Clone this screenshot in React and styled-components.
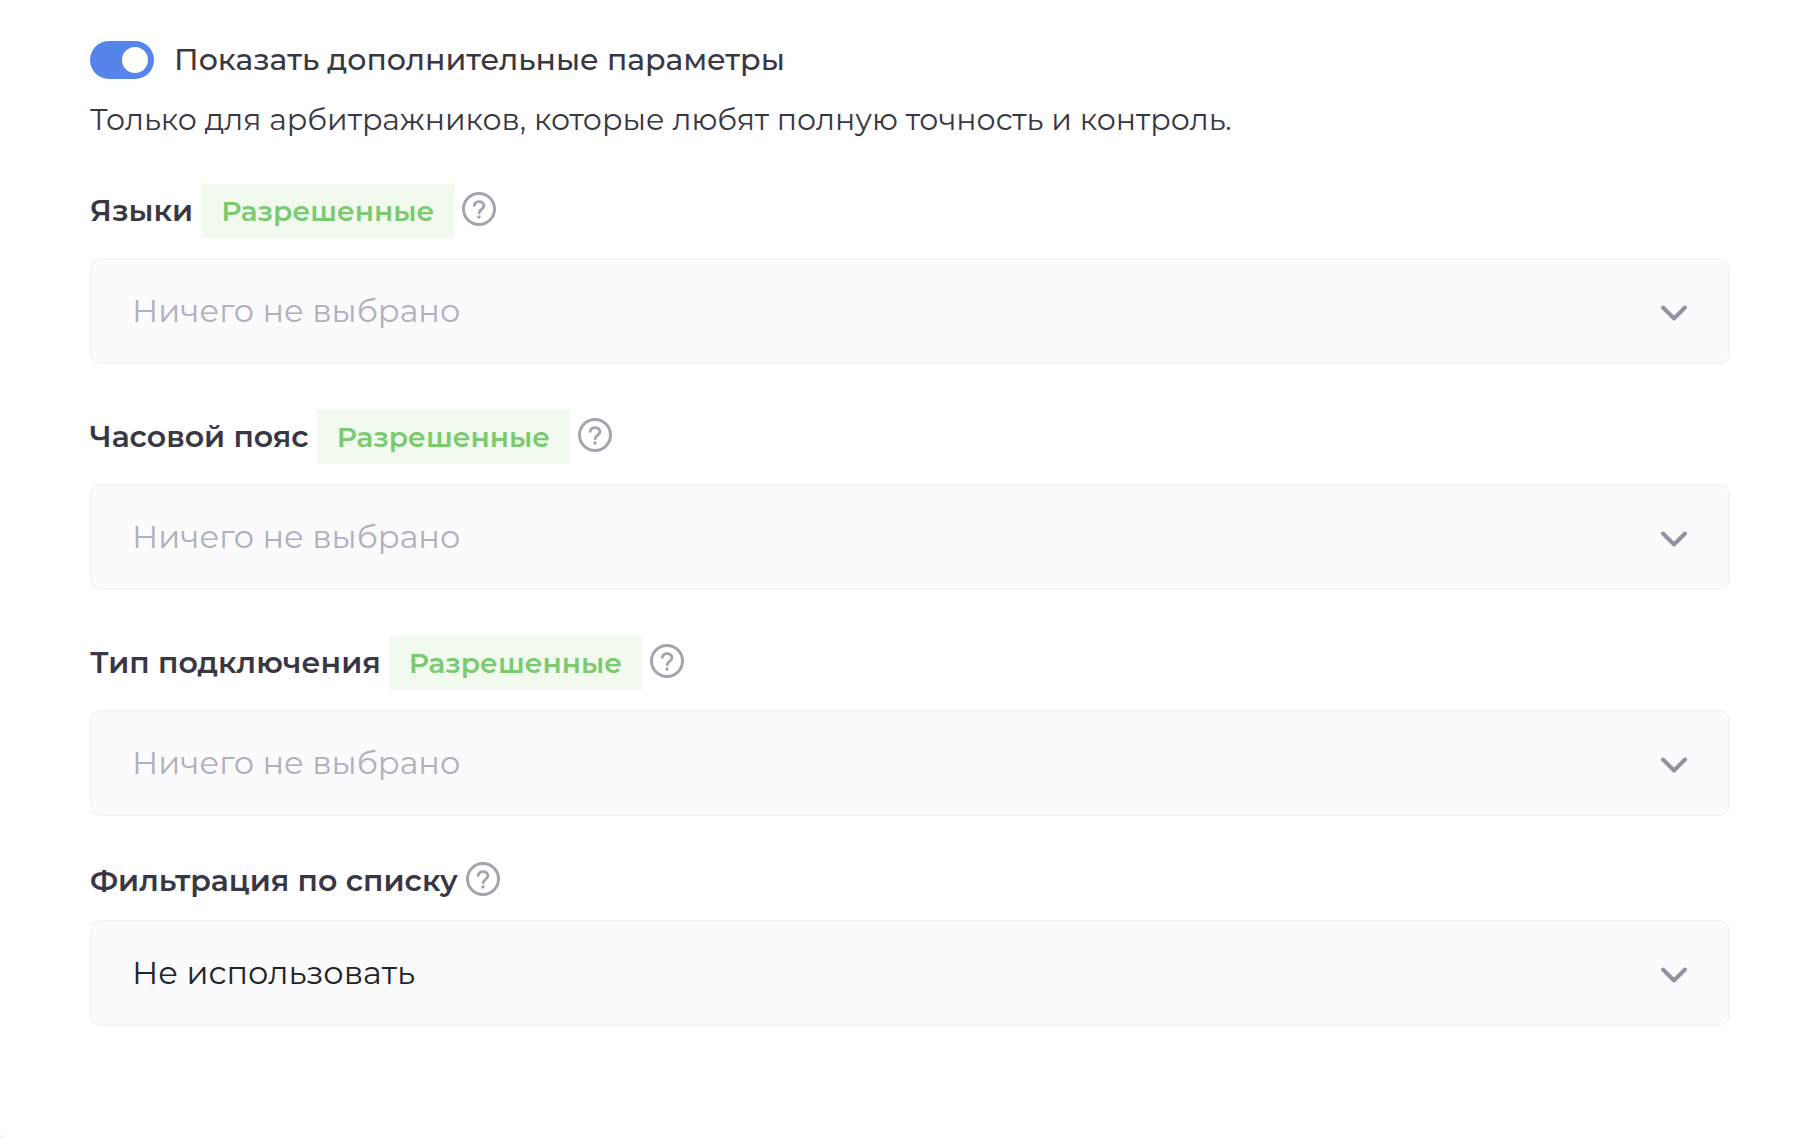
import React, { useState } from 'react'
import styled, { createGlobalStyle } from 'styled-components'

const GlobalStyle = createGlobalStyle`
  * {
    box-sizing: border-box;
  }
  body {
    margin: 0;
    background: #f4f4fa;
    font-family: 'Montserrat', 'Inter', 'Noto Sans', sans-serif;
    color: #393744;
  }
  button, input, select {
    font-family: inherit;
  }
`

const Card = styled.main`
  min-height: 100vh;
  padding: 41px 88px 88px 90px;
  background: #ffffff;
  border-bottom-left-radius: 6px;
`

const SwitchLabel = styled.label`
  display: flex;
  align-items: center;
  gap: 20px;
  font-size: 30px;
  line-height: 38px;
  font-weight: 500;
  cursor: pointer;
`

const Switch = styled.input`
  appearance: none;
  display: flex;
  align-items: center;
  flex-shrink: 0;
  width: 64px;
  height: 38px;
  margin: 0;
  padding: 6px;
  border-radius: 19px;
  background: #c4c2cf;
  cursor: pointer;

  &::before {
    content: '';
    width: 26px;
    height: 26px;
    border-radius: 50%;
    background: #ffffff;
  }
  &:checked {
    justify-content: flex-end;
    background: #5584ea;
  }
`

const Description = styled.p`
  margin: 23px 0 0;
  font-size: 30px;
  line-height: 36px;
`

const Field = styled.div`
  margin-top: 46px;
`

const FieldHeader = styled.div`
  display: flex;
  align-items: center;
  gap: 8px;
  margin-bottom: 20px;
`

const FieldLabel = styled.label`
  font-size: 30px;
  line-height: 36px;
  font-weight: 600;
`

const ModeButton = styled.button`
  height: 54px;
  padding: 0 20px;
  border: none;
  background: #f2faef;
  color: ${({ $allowed }) => ($allowed ? '#7bca70' : '#e2706b')};
  font-size: 28px;
  font-weight: 600;
  cursor: pointer;
`

const HelpButton = styled.button`
  display: flex;
  padding: 0 0 4px;
  border: none;
  background: none;
  color: #a5a3b0;
  cursor: pointer;
`

const SelectBox = styled.div`
  display: grid;
  align-items: center;

  & > * {
    grid-area: 1 / 1;
  }
`

const Select = styled.select`
  appearance: none;
  width: 100%;
  height: 106px;
  padding: 0 90px 2px 40px;
  border: 2px solid #f4f4fa;
  border-radius: 10px;
  background: #fbfbfd;
  color: ${({ $empty }) => ($empty ? '#b2b0bf' : '#212529')};
  font-size: 32px;
`

const Chevron = styled.svg`
  justify-self: end;
  margin: 4px 42px 0 0;
  pointer-events: none;
`

const fields = [
  { id: 'languages', title: 'Языки', hasMode: true, options: ['Русский', 'English'] },
  { id: 'timezone', title: 'Часовой пояс', hasMode: true, options: ['UTC', 'UTC+3'] },
  { id: 'connection', title: 'Тип подключения', hasMode: true, options: ['Wi-Fi', 'Mobile'] },
  { id: 'list', title: 'Фильтрация по списку', hasMode: false, options: [] },
]

const HelpIcon = () => (
  <svg width='34' height='34' viewBox='0 0 34 34' fill='none' stroke='currentColor' aria-hidden='true'>
    <circle cx='17' cy='17' r='15.5' strokeWidth='3' />
    <path
      d='M12.2 13.4c.5-2.3 2.4-3.8 4.8-3.8 2.8 0 4.9 1.7 4.9 4.1 0 3.3-4.3 3.9-4.7 6.9'
      strokeWidth='2.9'
      strokeLinecap='round'
    />
    <circle cx='17' cy='25' r='1.7' fill='currentColor' stroke='none' />
  </svg>
)

const FilterField = ({ id, title, hasMode, options }) => {
  const [allowed, setAllowed] = useState(true)
  const [value, setValue] = useState('')

  return (
    <Field>
      <FieldHeader>
        <FieldLabel htmlFor={id}>{title}</FieldLabel>
        {hasMode && (
          <ModeButton type='button' $allowed={allowed} onClick={() => setAllowed(!allowed)}>
            {allowed ? 'Разрешенные' : 'Запрещенные'}
          </ModeButton>
        )}
        <HelpButton type='button' aria-label={`Справка: ${title}`}>
          <HelpIcon />
        </HelpButton>
      </FieldHeader>
      <SelectBox>
        <Select
          id={id}
          value={value}
          $empty={hasMode && !value}
          onChange={(e) => setValue(e.target.value)}
        >
          <option value=''>{hasMode ? 'Ничего не выбрано' : 'Не использовать'}</option>
          {options.map((option) => (
            <option key={option}>{option}</option>
          ))}
        </Select>
        <Chevron width='28' height='18' viewBox='0 0 28 18' fill='none' aria-hidden='true'>
          <path
            d='M3 3.5 14 14.5 25 3.5'
            stroke='#9492a2'
            strokeWidth='4'
            strokeLinecap='round'
            strokeLinejoin='round'
          />
        </Chevron>
      </SelectBox>
    </Field>
  )
}

const App = () => {
  const [showExtra, setShowExtra] = useState(true)

  return (
    <>
      <GlobalStyle />
      <Card>
        <SwitchLabel>
          <Switch
            type='checkbox'
            role='switch'
            checked={showExtra}
            onChange={(e) => setShowExtra(e.target.checked)}
          />
          Показать дополнительные параметры
        </SwitchLabel>
        <Description>
          Только для арбитражников, которые любят полную точность и контроль.
        </Description>
        {showExtra && fields.map((field) => <FilterField key={field.id} {...field} />)}
      </Card>
    </>
  )
}

export default App
